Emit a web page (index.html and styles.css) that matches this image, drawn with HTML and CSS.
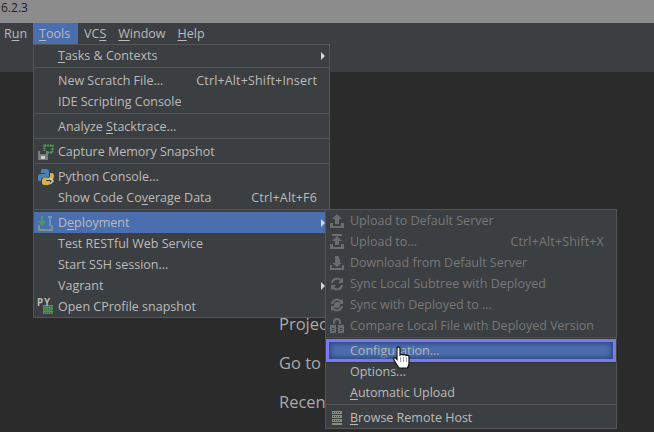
FILE: index.html
```html
<!DOCTYPE html>
<html lang="en">
<head>
  <meta charset="utf-8">
  <title>Tools menu</title>
  <link rel="stylesheet" href="styles.css">
</head>
<body>
  <div class="titlebar">6.2.3</div>
  <nav class="menubar">
    <span class="top-item first">R<u>u</u>n</span>
    <span class="top-item open"><u>T</u>ools</span>
    <span class="top-item">VC<u>S</u></span>
    <span class="top-item"><u>W</u>indow</span>
    <span class="top-item"><u>H</u>elp</span>
  </nav>
  <div class="toolbar"></div>
  <main class="workspace">
    <p>Projec</p>
    <p>Go to</p>
    <p>Recen</p>
  </main>

  <div class="menu tools-menu">
    <div class="row"><span class="icon"></span><span class="label"><u>T</u>asks &amp; Contexts</span><span class="arrow"></span></div>
    <hr>
    <div class="row"><span class="icon"></span><span class="label">New Scratch File...</span><span class="keys">Ctrl+Alt+Shift+Insert</span></div>
    <div class="row"><span class="icon"></span><span class="label">IDE Scripting Console</span></div>
    <hr>
    <div class="row"><span class="icon"></span><span class="label">Analyze <u>S</u>tacktrace...</span></div>
    <hr>
    <div class="row">
      <span class="icon">
        <svg width="18" height="18" viewBox="0 0 18 18">
          <path d="M7.500 2.500h8v7h-8z" fill="none" stroke="#499c54" stroke-width="2" stroke-dasharray="2 .6"/>
          <path d="M1 8h10v9H1z" fill="#7a7d7f"/>
          <path d="M3 8h6v3H3z" fill="#3c3f41"/>
          <path d="M4 13h4v3H4z" fill="#cfd0d1"/>
        </svg>
      </span>
      <span class="label">Capture Memory Snapshot</span>
    </div>
    <hr>
    <div class="row">
      <span class="icon">
        <svg width="18" height="18" viewBox="0 0 18 18">
          <path d="M5 1h5c1 0 2 1 2 2v5c0 1-1 2-2 2H6c-1 0-2 1-2 2v1H2c-1 0-1-1-1-3s0-4 2-4h5V5H4V3c0-1 0-2 1-2z" fill="#4a80b5"/>
          <path d="M13 5h2c1 0 2 1 2 3s-1 4-2 4H9v1h4v2c0 1-1 2-2 2H7c-1 0-2-1-2-2v-3c0-1 1-2 2-2h4c1 0 2-1 2-2z" fill="#d9b13f"/>
          <path d="M13 10l3 3-3 3" fill="none" stroke="#cfd0d1" stroke-width="1.500"/>
        </svg>
      </span>
      <span class="label">Python Console...</span>
    </div>
    <div class="row"><span class="icon"></span><span class="label">Show Code Co<u>v</u>erage Data</span><span class="keys">Ctrl+Alt+F6</span></div>
    <hr>
    <div class="row selected">
      <span class="icon">
        <svg width="18" height="18" viewBox="0 0 18 18">
          <path d="M1 11v6h15v-6h-2v4H3v-4z" fill="#8a8f7e"/>
          <path d="M6 2v5h3l-4 5-4-5h3V2z" fill="#499c54"/>
          <path d="M11 2h4v2h-1v8h-2V4h-1z" fill="#6897bb"/>
        </svg>
      </span>
      <span class="label">D<u>e</u>ployment</span><span class="arrow"></span>
    </div>
    <div class="row"><span class="icon"></span><span class="label">Test RESTful Web Service</span></div>
    <div class="row"><span class="icon"></span><span class="label">Start SSH session...</span></div>
    <div class="row"><span class="icon"></span><span class="label">Vagrant</span><span class="arrow"></span></div>
    <div class="row">
      <span class="icon">
        <svg width="18" height="18" viewBox="0 0 18 18">
          <path d="M6 7h10v9H6z" fill="#499c54"/>
          <path d="M5 9h12M5 12h12M5 15h12M8 6v11M11 6v11M14 6v11" stroke="#3c3f41" stroke-width=".7" stroke-dasharray="1 1"/>
        </svg>
        <span class="py-tag">PY</span>
      </span>
      <span class="label">Open CProfile snapshot</span>
    </div>
  </div>

  <div class="menu deploy-menu">
    <div class="row disabled">
      <span class="icon">
        <svg width="16" height="16" viewBox="0 0 16 16"><path d="M8 1l5 5h-3v5H6V6H3zM1 10h3v3h8v-3h3v5H1z" class="grey"/></svg>
      </span>
      <span class="label">Upload to Default Server</span>
    </div>
    <div class="row disabled">
      <span class="icon">
        <svg width="16" height="16" viewBox="0 0 16 16"><path d="M3 0h10v2H3zM8 2l5 5h-3v4H6V7H3zM1 10h3v3h8v-3h3v5H1z" class="grey"/></svg>
      </span>
      <span class="label">Upload to...</span><span class="keys">Ctrl+Alt+Shift+X</span>
    </div>
    <div class="row disabled">
      <span class="icon">
        <svg width="16" height="16" viewBox="0 0 16 16"><path d="M6 1h3l2 4v3h2l-5 4-5-4h3zM1 10h2v3h10v-3h2v5H1z" class="grey"/></svg>
      </span>
      <span class="label">Download from Default Server</span>
    </div>
    <div class="row disabled">
      <span class="icon">
        <svg width="16" height="16" viewBox="0 0 16 16"><path d="M2 7a6 6 0 0 1 10-4l2-1v5H9l2-2a4 4 0 0 0-7 2zM14 9a6 6 0 0 1-10 4l-2 1V9h5l-2 2a4 4 0 0 0 7-2z" class="grey"/></svg>
      </span>
      <span class="label">Sync Local Subtree with Deployed</span>
    </div>
    <div class="row disabled">
      <span class="icon">
        <svg width="16" height="16" viewBox="0 0 16 16"><path d="M2 7a6 6 0 0 1 10-4l2-1v5H9l2-2a4 4 0 0 0-7 2zM14 9a6 6 0 0 1-10 4l-2 1V9h5l-2 2a4 4 0 0 0 7-2z" class="grey"/><circle cx="8" cy="8" r="3" class="grey"/></svg>
      </span>
      <span class="label">Sync with Deployed to ...</span>
    </div>
    <div class="row disabled">
      <span class="icon">
        <svg width="16" height="16" viewBox="0 0 16 16"><path d="M4 6V4a4 4 0 0 1 8 0v2h-2V4a2 2 0 0 0-4 0v2z" class="grey"/><path d="M1 7h6v8H1zM9 7h6v8H9z" class="grey"/><path d="M3 10h2v1H3zM3 12h2v1H3zM11 10h2v1h-2zM11 12h2v1h-2z" fill="#3c3f41"/></svg>
      </span>
      <span class="label">Compare Local File with Deployed Version</span>
    </div>
    <hr>
    <div class="row selected"><span class="icon"></span><span class="label">Configuration...</span></div>
    <div class="row"><span class="icon"></span><span class="label">Options...</span></div>
    <div class="row"><span class="icon"></span><span class="label"><u>A</u>utomatic Upload</span></div>
    <hr>
    <div class="row">
      <span class="icon">
        <svg width="16" height="16" viewBox="0 0 16 16"><path d="M3 1h10v3H3zM3 5h10v3H3zM3 9h10v3H3zM3 13h10v2H3z" fill="#8a8f7e"/><path d="M4 2.500h8M4 6.500h8M4 10.500h8" stroke="#3c3f41" stroke-dasharray="1 1"/></svg>
      </span>
      <span class="label"><u>B</u>rowse Remote Host</span>
    </div>
  </div>

  <div class="callout"></div>
  <svg class="hand" width="20" height="25" viewBox="0 0 20 25">
    <path d="M4 1.500c1-1 3-.5 3 1V9c1-.8 2.500-.8 3 0 1-.7 2.500-.5 3 .4 1-.5 3 0 3 1.300v6.800c0 2-1 3-1.500 4.500H6C5 20 1.500 16 .8 13.500c-.5-1.500 1-2.300 2-1.300L4 13.500V2.500z" fill="#fff" stroke="#111" stroke-width="1.200"/>
    <path d="M7.500 11v5M10.500 11v5M13.500 11.500V16" stroke="#888" stroke-width=".8"/>
  </svg>
</body>
</html>
```

FILE: styles.css
```css
body {
  margin: 0;
  width: 654px;
  height: 432px;
  overflow: hidden;
  position: relative;
  background: #2b2b2b;
  color: #bbbbbb;
  font-family: "Open Sans", sans-serif;
  font-size: 12.5px;
}

u {
  text-underline-offset: 2px;
}

.titlebar {
  height: 23px;
  background: #8c8c8c;
  color: #222;
  font-size: 12px;
  line-height: 15px;
  padding-left: 1px;
}

.menubar {
  display: flex;
  height: 21px;
  background: #3c3f41;
}

.top-item {
  padding: 0 6px;
  line-height: 21px;
}

.top-item.first {
  padding-left: 4px;
}

.top-item.open {
  padding-right: 8px;
  background: #4b6eaf;
}

.toolbar {
  height: 28px;
  background: #3c3f41;
}

.workspace {
  margin-left: 279px;
  padding-top: 241px;
  font-size: 16.5px;
  color: #a9a9a9;
}

.workspace p {
  margin: 0 0 18px;
  line-height: 21px;
  white-space: nowrap;
}

.menu {
  position: absolute;
  background: #3c3f41;
  border: 1px solid #555555;
}

.tools-menu {
  left: 33px;
  top: 44px;
  width: 295px;
}

.deploy-menu {
  left: 325px;
  top: 209px;
  width: 290px;
}

.row {
  display: flex;
  height: 21px;
  align-items: center;
  white-space: nowrap;
}

.icon {
  position: relative;
  display: flex;
  flex: none;
  width: 24px;
  padding-left: 3px;
  box-sizing: border-box;
}

.label {
  flex: 1;
}

.keys {
  padding-right: 12px;
  letter-spacing: .15px;
}

.arrow {
  width: 0;
  height: 0;
  margin-right: 4px;
  border-left: 4px solid #d8d8d8;
  border-top: 4px solid transparent;
  border-bottom: 4px solid transparent;
}

.selected {
  background: #4b6eaf;
}

.disabled {
  color: #777777;
}

.grey {
  fill: #6a6c6e;
}

.py-tag {
  position: absolute;
  left: 3px;
  top: -1px;
  font: bold 10px "DejaVu Sans Mono", monospace;
  letter-spacing: 1px;
  color: #bbbbbb;
}

hr {
  border: 0;
  border-top: 1px solid #555555;
  margin: 1px 0 2px;
}

.callout {
  position: absolute;
  left: 326px;
  top: 339px;
  width: 284px;
  height: 17px;
  border: 3px solid #7a7aee;
  box-shadow: inset 0 0 5px 2px #2f4a80, 0 0 2px #222222;
}

.hand {
  position: absolute;
  left: 393px;
  top: 346px;
}
```
